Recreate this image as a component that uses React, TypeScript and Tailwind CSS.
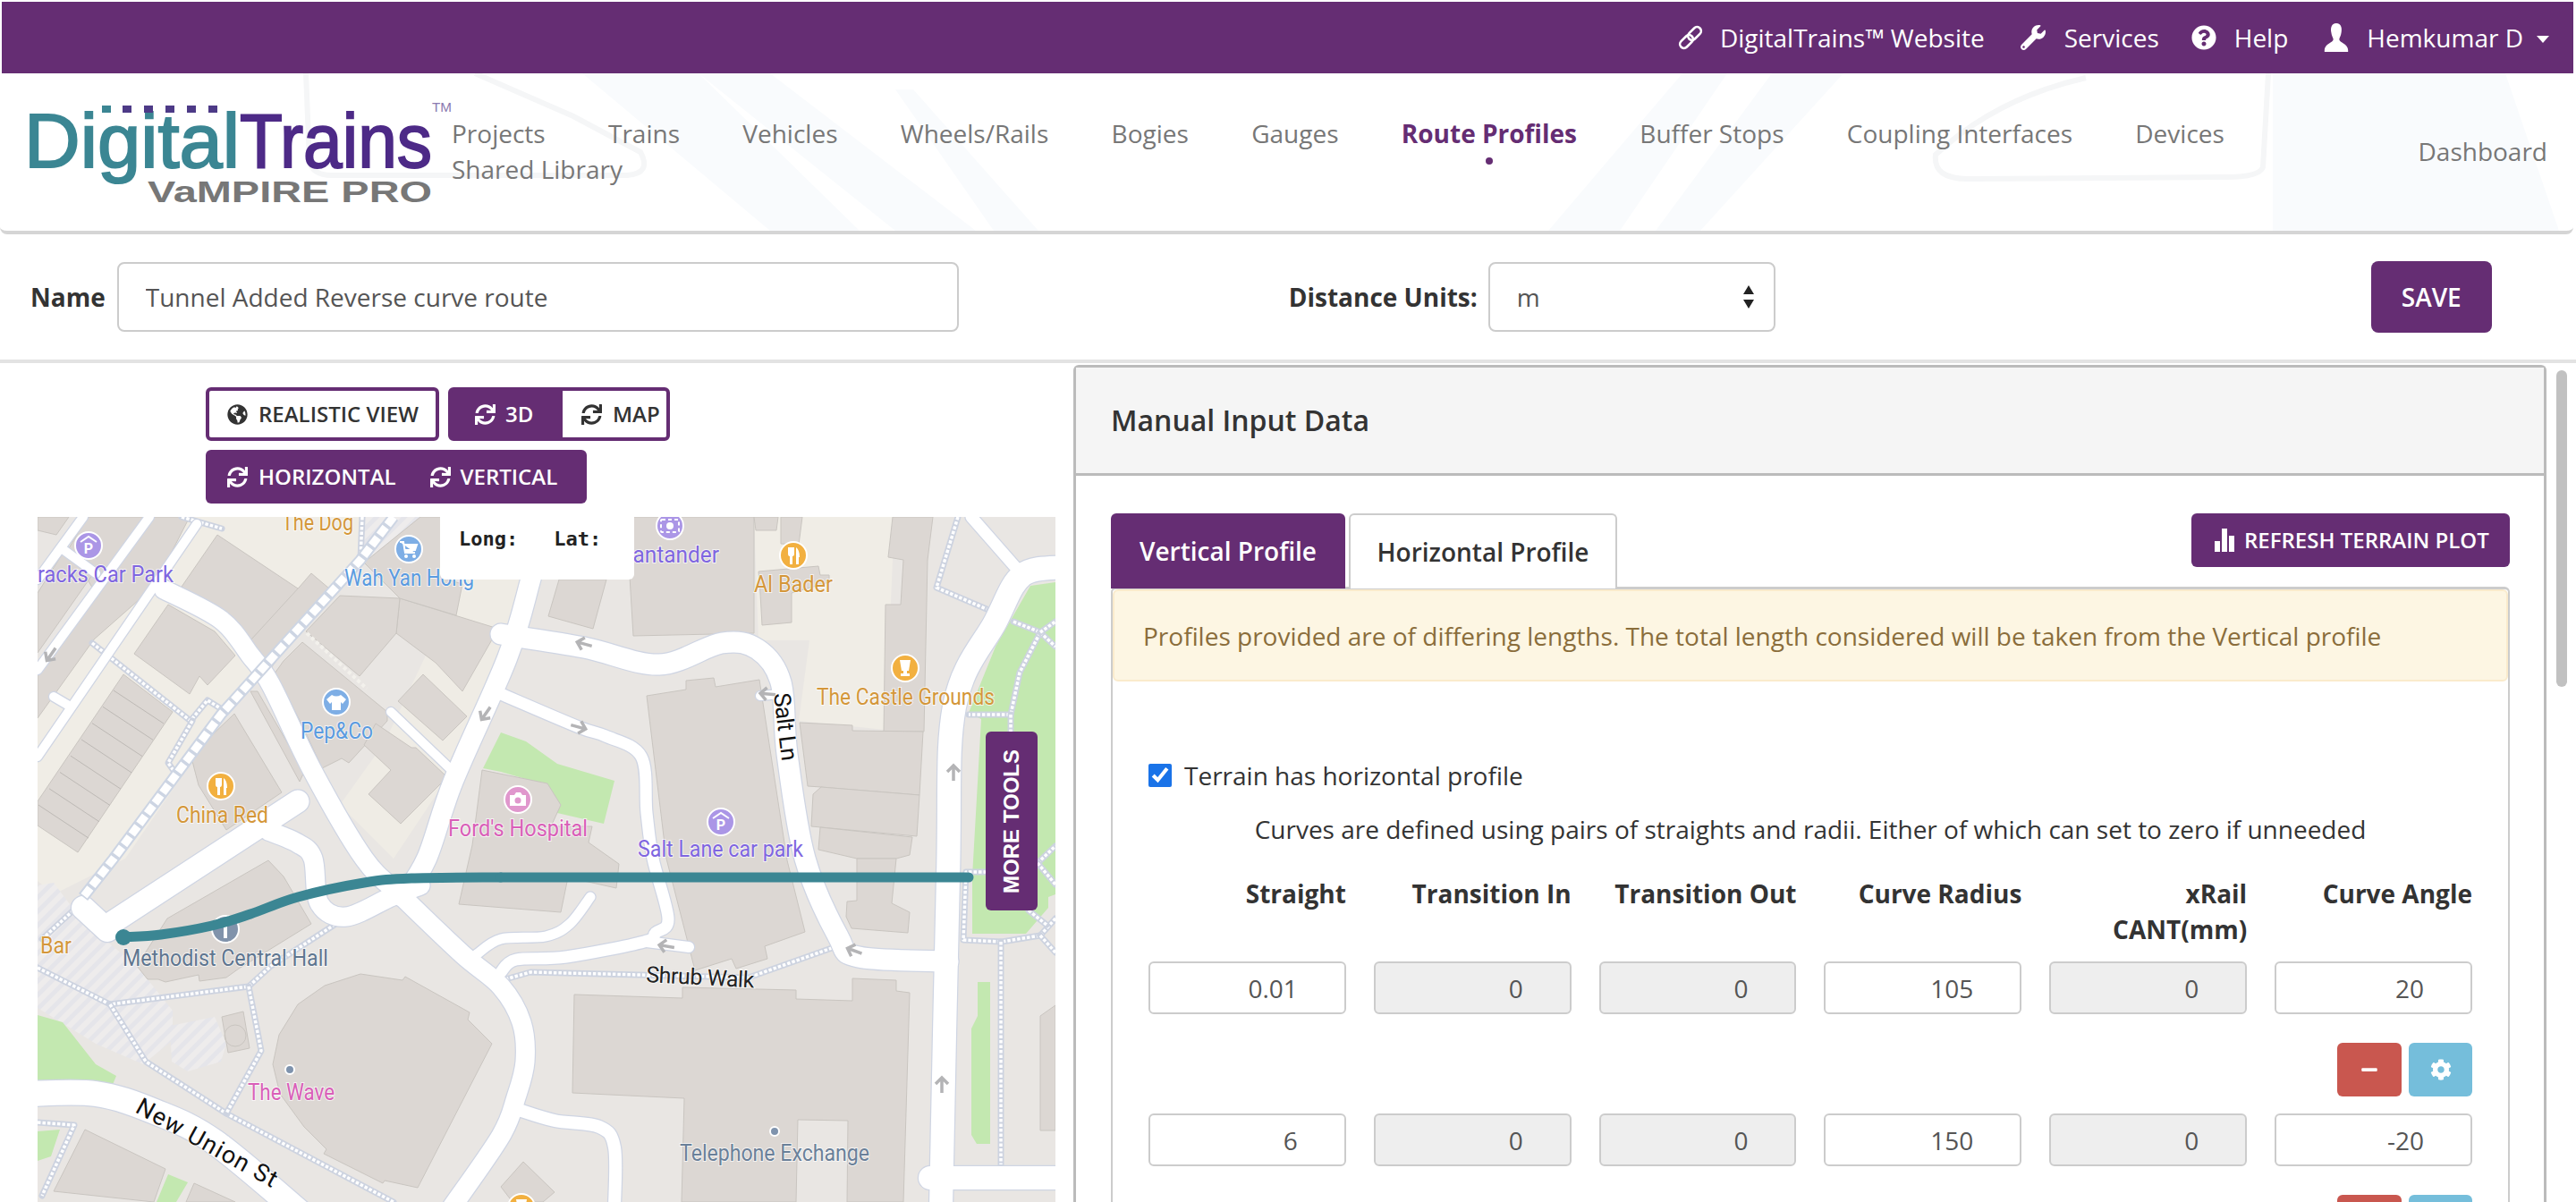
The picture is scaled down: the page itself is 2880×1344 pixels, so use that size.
import React from "react";
import { FaGlobeAmericas, FaSync, FaWrench, FaQuestionCircle, FaCog, FaMinus } from "react-icons/fa";

type Pt = [number, number];

// catmull-rom through the points, keeps the map roads from looking polygonal
const smooth = (p: Pt[]) => {
  let d = `M${p[0][0]} ${p[0][1]}`;
  for (let i = 0; i < p.length - 1; i++) {
    const a = p[i - 1] || p[i];
    const b = p[i];
    const c = p[i + 1];
    const e = p[i + 2] || c;
    d += ` C${b[0] + (c[0] - a[0]) / 6} ${b[1] + (c[1] - a[1]) / 6} ${c[0] - (e[0] - b[0]) / 6} ${c[1] - (e[1] - b[1]) / 6} ${c[0]} ${c[1]}`;
  }
  return d;
};

const poly = (p: number[]) => p.join(" ");

const buildings: number[][] = [
  [243, 598, 333, 658, 337, 661, 280, 716, 247, 688, 203, 656],
  [188, 676, 240, 706, 263, 733, 232, 766, 223, 756, 212, 776, 150, 731],
  [138, 754, 193, 796, 87, 953, 42, 923, 42, 896],
  [335, 656, 348, 641, 368, 658, 300, 751, 273, 739, 280, 716],
  [42, 593, 63, 598, 77, 578, 42, 578],
  [77, 613, 98, 578, 163, 578, 105, 660],
  [70, 619, 103, 643, 42, 730, 42, 663],
  [170, 578, 212, 578, 172, 656, 105, 715, 42, 803, 42, 753, 103, 666],
  [447, 669, 557, 703, 517, 773, 487, 741, 443, 708],
  [407, 629, 470, 578, 493, 578, 493, 646, 517, 653, 510, 688, 447, 669],
  [342, 706, 380, 666, 447, 669, 443, 708, 402, 756],
  [317, 739, 338, 718, 433, 796, 433, 806, 390, 853, 382, 848, 360, 859, 337, 809, 307, 753],
  [473, 754, 522, 801, 495, 828, 445, 784],
  [420, 809, 460, 836, 465, 836, 500, 869, 448, 921, 412, 888, 437, 861, 407, 833],
  [262, 798, 315, 886, 253, 928, 222, 878, 215, 851, 235, 824],
  [280, 773, 288, 773, 340, 863, 335, 874],
  [625, 648, 678, 648, 663, 703, 613, 689],
  [700, 578, 843, 578, 843, 708, 708, 711],
  [843, 578, 870, 578, 868, 593, 845, 593],
  [873, 578, 897, 578, 893, 609, 873, 608],
  [848, 639, 915, 633, 917, 643, 927, 643, 927, 651, 885, 663, 885, 696, 852, 699, 850, 664],
  [998, 578, 1043, 578, 1037, 626, 1033, 818, 988, 818, 990, 676, 1007, 676, 1010, 626, 993, 623],
  [894, 808, 953, 811, 953, 817, 1032, 818, 1028, 889, 918, 880, 903, 879],
  [918, 880, 1028, 889, 1025, 935, 907, 924, 909, 888],
  [917, 925, 1020, 936, 1017, 956, 1002, 960, 958, 960, 915, 950],
  [958, 960, 1002, 960, 997, 1010, 1017, 1020, 1015, 1043, 952, 1038, 946, 1025, 947, 1008, 958, 1007],
  [723, 778, 767, 771, 767, 761, 798, 758, 800, 768, 849, 760, 880, 962, 900, 1042, 855, 1058, 858, 1072, 823, 1083, 818, 1072, 777, 1085, 745, 960],
  [539, 861, 612, 876, 627, 900, 616, 924, 662, 924, 658, 942, 692, 966, 689, 993, 635, 981, 627, 1020, 513, 1011, 528, 945, 532, 915],
  [300, 962, 317, 980, 348, 1033, 267, 1083, 253, 1093, 223, 1097, 222, 1090, 185, 1098, 177, 1095, 165, 1095, 153, 1080, 187, 1027],
  [248, 1137, 272, 1131, 279, 1172, 255, 1177],
  [305, 1190, 312, 1157, 333, 1123, 363, 1102, 403, 1089, 450, 1096, 453, 1092, 525, 1132, 523, 1140, 550, 1167, 467, 1328, 430, 1320, 428, 1323, 362, 1290, 365, 1285, 340, 1260, 313, 1223],
  [95, 1263, 185, 1307, 172, 1344, 60, 1332],
  [217, 1323, 263, 1344, 208, 1344],
  [642, 1112, 763, 1116, 763, 1104, 890, 1107, 890, 1117, 953, 1119, 953, 1094, 1002, 1096, 1002, 1108, 1017, 1110, 1010, 1344, 947, 1344, 948, 1253, 892, 1252, 890, 1344, 762, 1344, 765, 1228, 640, 1222],
  [585, 1299, 620, 1333, 607, 1344, 573, 1344, 560, 1327],
  [1163, 1136, 1180, 1124, 1180, 1264, 1163, 1264],
];

const greens: number[][] = [
  [540, 859, 560, 819, 588, 829, 623, 854, 687, 873, 675, 921, 610, 906, 610, 886, 612, 878, 560, 863],
  [1152, 655, 1180, 651, 1180, 1000, 1172, 1003, 1172, 1015, 1147, 1044, 1087, 1044, 1087, 980, 1097, 804, 1083, 797, 1113, 723],
  [1093, 1098, 1107, 1098, 1107, 1279, 1092, 1279, 1086, 1269, 1086, 1150, 1093, 1136],
  [42, 1135, 70, 1143, 107, 1190, 130, 1203, 125, 1215, 42, 1210],
  [42, 1265, 67, 1263, 57, 1293, 42, 1298],
  [188, 1313, 210, 1322, 197, 1344, 175, 1344],
];

const roads: { w: number; p: Pt[] }[] = [
  { w: 10, p: [[93, 578], [42, 648]] },
  { w: 10, p: [[42, 749], [167, 578]] },
  { w: 10, p: [[70, 614], [107, 641]] },
  { w: 10, p: [[42, 846], [220, 586]] },
  { w: 10, p: [[60, 779], [77, 789]] },
  { w: 10, p: [[437, 796], [510, 866]] },
  { w: 21, p: [[183, 659], [247, 693], [280, 733], [303, 766], [350, 863], [407, 960], [450, 1003], [517, 1067], [560, 1103], [583, 1143], [587, 1187], [577, 1227], [560, 1270], [505, 1350]] },
  { w: 22, p: [[600, 620], [593, 649], [567, 736], [507, 873], [477, 960], [450, 1003]] },
  { w: 23, p: [[560, 709], [653, 724], [737, 743], [807, 719], [847, 726], [873, 763], [880, 843], [900, 960], [937, 1047], [960, 1070], [1060, 1075]] },
  { w: 13, p: [[560, 776], [647, 813], [677, 823], [717, 846], [723, 909], [730, 960], [747, 1027], [733, 1043], [720, 1053], [633, 1070], [577, 1073], [560, 1087]] },
  { w: 12, p: [[723, 1053], [770, 1059]] },
  { w: 10, p: [[850, 778], [873, 776]] },
  { w: 11, p: [[660, 1003], [637, 1033], [610, 1047], [560, 1050], [533, 1067]] },
  { w: 26, p: [[93, 1015], [120, 1040]] },
  { w: 25, p: [[120, 1035], [333, 896]] },
  { w: 21, p: [[300, 929], [333, 943], [350, 960], [357, 1010], [387, 1025], [437, 1003], [470, 990]] },
  { w: 28, p: [[30, 1223], [107, 1223], [173, 1243], [240, 1277], [340, 1360]] },
  { w: 13, p: [[1086, 578], [1143, 643]] },
  { w: 26, p: [[1190, 634], [1143, 643], [1113, 695], [1067, 790], [1060, 980], [1052, 1350]] },
  { w: 26, p: [[1040, 1317], [1190, 1317]] },
  { w: 14, p: [[577, 1240], [620, 1253], [670, 1260], [687, 1283], [687, 1350]] },
];

const paths: Pt[][] = [
  [[103, 719], [213, 806], [232, 783], [248, 793]],
  [[215, 806], [188, 853], [195, 863]],
  [[203, 578], [248, 591]],
  [[405, 578], [403, 626]],
  [[47, 1050], [82, 1018]],
  [[42, 1082], [123, 1123], [278, 1103], [303, 1080], [377, 1032]],
  [[123, 1123], [163, 1187], [253, 1245], [440, 1344]],
  [[278, 1103], [292, 1175], [253, 1245]],
  [[42, 1255], [83, 1258], [47, 1337]],
  [[565, 1095], [593, 1087], [837, 1093], [930, 1060]],
  [[1071, 578], [1047, 657], [1103, 681]],
  [[1133, 695], [1163, 707], [1140, 752], [1130, 799], [1083, 799]],
  [[1163, 707], [1180, 723]],
  [[1163, 707], [1180, 695]],
  [[1130, 799], [1130, 818]],
  [[1103, 975], [1080, 975], [1077, 1051], [1120, 1053], [1163, 1046]],
  [[1119, 1053], [1119, 1302]],
  [[1163, 1046], [1180, 1027]],
  [[1163, 1046], [1180, 1065]],
  [[1150, 1018], [1170, 1034]],
  [[1160, 965], [1180, 946]],
  [[1160, 965], [1180, 989]],
];

const arrows: [number, number, number][] = [
  [57, 732, 215], [543, 798, 215], [653, 720, 285], [647, 813, 105],
  [858, 776, 275], [1066, 864, 0], [745, 1058, 280], [955, 1063, 290], [1053, 1213, 0],
];

const labels: { t: string; x: number; y: number; w: number; c: string }[] = [
  { t: "racks Car Park", x: 42, y: 651, w: 152, c: "#7f66e0" },
  { t: "The Dog", x: 315, y: 593, w: 80, c: "#d4973a" },
  { t: "Wah Yan Hong", x: 385, y: 655, w: 145, c: "#5a9be0" },
  { t: "Pep&Co", x: 336, y: 826, w: 81, c: "#5a9be0" },
  { t: "China Red", x: 197, y: 920, w: 103, c: "#d4973a" },
  { t: "Ford's Hospital", x: 501, y: 935, w: 156, c: "#d95fb8" },
  { t: "Santander", x: 693, y: 629, w: 111, c: "#7f66e0" },
  { t: "Al Bader", x: 843, y: 662, w: 88, c: "#d4973a" },
  { t: "The Castle Grounds", x: 913, y: 788, w: 199, c: "#d4973a" },
  { t: "Salt Lane car park", x: 713, y: 958, w: 185, c: "#7f66e0" },
  { t: "Methodist Central Hall", x: 137, y: 1080, w: 230, c: "#5f7690" },
  { t: "Bar", x: 45, y: 1066, w: 35, c: "#d4973a" },
  { t: "The Wave", x: 277, y: 1230, w: 97, c: "#d95fb8" },
  { t: "Telephone Exchange", x: 760, y: 1298, w: 212, c: "#6a8099" },
];

const Pin = ({ x, y, c, kind }: { x: number; y: number; c: string; kind: string }) => (
  <g transform={`translate(${x} ${y})`}>
    <circle r="15" fill={c} stroke="#fff" strokeWidth="2" />
    {kind === "p" && (
      <>
        <path d="M-9 -4 L0 -10 L9 -4" fill="none" stroke="#fff" strokeWidth="2" />
        <text y="9" textAnchor="middle" fontSize="16" fontWeight="700" fill="#fff" fontFamily="Roboto, sans-serif">P</text>
      </>
    )}
    {kind === "fork" && <path d="M-6 -9 V-2 Q-6 1 -4 1 V10 H-1 V1 Q1 1 1 -2 V-9 M3 10 V-9 Q7 -6 7 2 H6 V10 Z" fill="#fff" />}
    {kind === "cart" && (
      <>
        <path d="M-10 -8 H-6 L-4 4 H7 M-6 -5 H9 L7 1 H-5" fill="#fff" stroke="#fff" strokeWidth="2" />
        <circle cx="-3" cy="8" r="2" fill="#fff" />
        <circle cx="6" cy="8" r="2" fill="#fff" />
      </>
    )}
    {kind === "tee" && <path d="M-5 -8 L-11 -3 L-7 2 L-5 0 V9 H5 V0 L7 2 L11 -3 L5 -8 Q0 -5 -5 -8 Z" fill="#fff" />}
    {kind === "cam" && (
      <>
        <path d="M-9 -5 H-4 L-2 -8 H3 L5 -5 H9 V7 H-9 Z" fill="#fff" />
        <circle cy="1" r="3.5" fill={c} />
      </>
    )}
    {kind === "cup" && <path d="M-6 -9 H6 L4 3 H2 V6 H5 V9 H-5 V6 H-2 V3 H-4 Z" fill="#fff" />}
    {kind === "money" && (
      <>
        <rect x="-10" y="-7" width="20" height="14" rx="1" fill="none" stroke="#fff" strokeWidth="2" strokeDasharray="4 3" />
        <circle r="4" fill="#fff" />
      </>
    )}
    {kind === "info" && <path d="M-2 -3 H2 V10 H-2 Z M-2 -9 H2 V-5 H-2 Z" fill="#fff" />}
  </g>
);

const RouteMap = () => (
  <svg viewBox="42 578 1138 766" className="block w-[1138px] h-[766px]">
    <defs>
      <pattern id="hatch" width="11" height="11" patternUnits="userSpaceOnUse" patternTransform="rotate(45)">
        <rect width="11" height="11" fill="#eeecec" />
        <rect width="5" height="11" fill="#e5e5ea" />
      </pattern>
    </defs>
    <rect x="42" y="578" width="1138" height="766" fill="#e9e6e3" />
    <polygon points={poly([160, 578, 440, 578, 400, 640, 250, 800, 140, 960, 60, 1000, 42, 985, 42, 800, 140, 660])} fill="#f0ede6" />
    <polygon points={poly([520, 640, 600, 640, 560, 760, 500, 870, 440, 960, 380, 900, 430, 830])} fill="#efece5" />
    <polygon points={poly([893, 578, 1000, 578, 990, 816, 893, 806, 905, 716, 848, 716, 843, 578])} fill="#f0ede6" />
    <polygon points={poly([42, 990, 60, 987, 87, 1023, 120, 1053, 153, 1080, 193, 1130, 193, 1163, 160, 1190, 107, 1167, 42, 1127])} fill="url(#hatch)" />
    <polygon points={poly([190, 1147, 240, 1137, 253, 1167, 247, 1187, 210, 1198, 192, 1187])} fill="url(#hatch)" />
    <polygon points={poly([405, 578, 470, 578, 420, 625, 400, 625])} fill="url(#hatch)" />
    {greens.map((g, i) => (
      <polygon key={i} points={poly(g)} fill="#c3e8b0" />
    ))}
    {buildings.map((b, i) => (
      <polygon key={i} points={poly(b)} fill="#dcd7d3" stroke="#c9c5c0" strokeWidth="1" />
    ))}
    <circle cx="263" cy="1158" r="12" fill="none" stroke="#c9c5c0" />
    {[0, 1, 2, 3, 4, 5, 6, 7].map((i) => (
      <line key={i} x1={127 - i * 12} y1={772 + i * 18.3} x2={183 - i * 12} y2={809 + i * 18.3} stroke="#bdb9b5" strokeWidth="1" />
    ))}
    <path d="M343 708 L410 770" fill="none" stroke="#f3f1ec" strokeWidth="4" strokeDasharray="4 3" />
    {paths.map((p, i) => (
      <g key={i} fill="none" strokeLinejoin="round">
        <polyline points={p.flat().join(" ")} stroke="#cdd3e0" strokeWidth="7" strokeLinecap="round" />
        <polyline points={p.flat().join(" ")} stroke="#fff" strokeWidth="3.5" strokeDasharray="3.5 2" />
      </g>
    ))}
    {roads.map((r, i) => (
      <path key={i} d={smooth(r.p)} fill="none" stroke="#cfd5e3" strokeWidth={r.w + 2.5} strokeLinecap="round" />
    ))}
    {roads.map((r, i) => (
      <path key={i} d={smooth(r.p)} fill="none" stroke="#fff" strokeWidth={r.w} strokeLinecap="round" />
    ))}
    <g fill="none">
      <polyline points="440,578 403,626 247,799 127,960 93,1003" stroke="#cdd5e3" strokeWidth="13" />
      <polyline points="440,578 403,626 247,799 127,960 93,1003" stroke="#fff" strokeWidth="9" strokeDasharray="11 3.5" />
    </g>
    {arrows.map(([x, y, r], i) => (
      <path key={i} d="M0 9 V-8 M-7 -1 L0 -8 L7 -1" transform={`translate(${x} ${y}) rotate(${r})`} fill="none" stroke="#b4b4b6" strokeWidth="3.5" />
    ))}
    <g fontFamily="Roboto, sans-serif" fontSize="25" stroke="#fff" strokeOpacity="0.7" strokeWidth="2" paintOrder="stroke">
      {labels.map((l) => (
        <text key={l.t} x={l.x} y={l.y} fill={l.c} textLength={l.w} lengthAdjust="spacingAndGlyphs">{l.t}</text>
      ))}
      <text x="722" y="1098" fill="#222" textLength="121" transform="rotate(3 722 1098)">Shrub Walk</text>
      <text x="150" y="1243" fill="#111" fontSize="27" textLength="176" transform="rotate(29 150 1243)">New Union St</text>
      <text x="865" y="776" fill="#111" fontSize="26" textLength="76" transform="rotate(83 865 776)">Salt Ln</text>
    </g>
    <Pin x={99} y={610} c="#ab96e6" kind="p" />
    <Pin x={457} y={614} c="#7eaee5" kind="cart" />
    <Pin x={376} y={785} c="#7eaee5" kind="tee" />
    <Pin x={247} y={879} c="#f2b040" kind="fork" />
    <Pin x={749} y={588} c="#ab96e6" kind="money" />
    <Pin x={887} y={621} c="#f2b040" kind="fork" />
    <Pin x={1012} y={747} c="#f2b040" kind="cup" />
    <Pin x={579} y={894} c="#e097cd" kind="cam" />
    <Pin x={806} y={919} c="#ab96e6" kind="p" />
    <Pin x={252} y={1039} c="#8193ab" kind="info" />
    <Pin x={583} y={1350} c="#f2b040" kind="cup" />
    <circle cx="324" cy="1196" r="5" fill="#7f93ad" stroke="#fff" strokeWidth="2" />
    <circle cx="866" cy="1265" r="5" fill="#7f93ad" stroke="#fff" strokeWidth="2" />
    <path d={smooth([[138, 1048], [180, 1045], [237, 1035], [280, 1022], [333, 1003], [407, 987], [460, 982], [560, 981]])} fill="none" stroke="#3b8693" strokeWidth="11" strokeLinecap="round" />
    <path d="M560 981 H1083" fill="none" stroke="#3b8693" strokeWidth="11" strokeLinecap="round" />
    <circle cx="138" cy="1048" r="9" fill="#3b8693" />
  </svg>
);

const Logo = () => (
  <svg viewBox="0 0 481 176" className="block w-[481px] h-[176px] shrink-0 relative">
    <g fontFamily="'Liberation Sans', Arial, sans-serif">
      <text x="3" y="105" fontSize="86" fill="#3b8693" stroke="#3b8693" strokeWidth="2" textLength="241" lengthAdjust="spacingAndGlyphs">Digital</text>
      <text x="244" y="105" fontSize="86" fill="#4d2a87" stroke="#4d2a87" strokeWidth="2" textLength="215" lengthAdjust="spacingAndGlyphs">Trains</text>
      <text x="141" y="144" fontSize="34" fontWeight="700" fill="#777" textLength="318" lengthAdjust="spacingAndGlyphs">VaMPIRE PRO</text>
      <text x="459" y="43" fontSize="15" fill="#8a7ab0" textLength="22" lengthAdjust="spacingAndGlyphs">TM</text>
    </g>
    <g>
      {[90, 113, 137, 161, 185, 209].map((x) => (
        <rect key={x} x={x} y="36" width="10" height="8" fill={x < 110 ? "#3b8693" : "#4d3a87"} />
      ))}
    </g>
  </svg>
);

const UserIcon = () => (
  <svg viewBox="0 0 28 34" className="w-[28px] h-[32px]" fill="#fff">
    <path d="M14 0 C20 0 21 6 20 11 C19.500 15 18 17 17.500 19 C17.500 23 28 24 28 32 V34 H0 V32 C0 24 10.500 23 10.500 19 C10 17 8.500 15 8 11 C7 6 8 0 14 0 Z" />
  </svg>
);

const LinkIcon = () => (
  <svg viewBox="0 0 28 28" className="w-[28px] h-[28px]" fill="none" stroke="#fff" strokeWidth="2.6">
    <rect x="10" y="5" width="17" height="9" rx="4.5" transform="rotate(-45 18.500 9.500)" />
    <rect x="1" y="14" width="17" height="9" rx="4.5" transform="rotate(-45 9.500 18.500)" />
  </svg>
);

const navItems = ["Projects", "Trains", "Vehicles", "Wheels/Rails", "Bogies", "Gauges", "Route Profiles", "Buffer Stops", "Coupling Interfaces", "Devices", "Shared Library"];

const NavBackdrop = () => (
  <svg viewBox="0 82 2875 176" className="absolute inset-0 w-full h-full">
    <g fill="#f9fbfd">
      <polygon points="650,82 780,82 960,258 860,258" />
      <polygon points="780,82 860,82 1090,258 1000,258" />
      <polygon points="1000,100 1020,100 1160,258 1110,258" />
      <polygon points="1730,258 1810,258 1930,82 1880,82" />
      <polygon points="1850,258 1900,258 2060,82 1980,82" />
      <polygon points="2540,82 2800,82 2860,258 2540,258" />
    </g>
    <g fill="none" stroke="#f5f6f7" strokeWidth="6">
      <path d="M341 82 L345 180 Q348 196 370 196 L700 196 Q728 194 715 170 L640 130 L530 82" />
      <path d="M2535 82 L2529 187 Q2525 198 2487 198 L2199 200 Q2160 200 2163 173 Q2230 110 2331 87" />
    </g>
  </svg>
);

const TopBar = () => (
  <div className="ml-[2px] mr-[3px] h-[80px] bg-[#652d73] flex justify-end items-center pr-[27px] text-white text-[28px]">
    <LinkIcon />
    <span className="ml-[19px]">DigitalTrains™ Website</span>
    <FaWrench className="ml-[40px] w-[28px] h-[28px]" />
    <span className="ml-[21px]">Services</span>
    <FaQuestionCircle className="ml-[36px] w-[28px] h-[28px]" />
    <span className="ml-[20px]">Help</span>
    <div className="ml-[40px]"><UserIcon /></div>
    <span className="ml-[20px]">Hemkumar D</span>
    <div className="ml-[15px] mt-[4px] w-0 h-0 border-x-[7px] border-x-transparent border-t-[8px] border-t-white" />
  </div>
);

const NavBar = () => (
  <div className="relative h-[180px] bg-white border-b-[4px] border-[#d5d5d5] rounded-b-[8px] overflow-hidden flex pl-[24px] pr-[29px] mr-[3px] text-[#777] text-[28px] leading-[40px]">
    <NavBackdrop />
    <Logo />
    <div className="relative w-[2100px] pt-[47px] flex flex-wrap content-start gap-x-[70.3px]">
      {navItems.map((n) =>
        n === "Route Profiles" ? (
          <div key={n} className="relative font-bold text-[#652d73]">
            {n}
            <div className="absolute left-1/2 top-[47px] w-[8px] h-[8px] -ml-[4px] rounded-full bg-[#652d73]" />
          </div>
        ) : (
          <div key={n}>{n}</div>
        )
      )}
    </div>
    <div className="relative ml-auto pt-[67px]">Dashboard</div>
  </div>
);

const NameRow = () => (
  <div className="h-[140px] flex items-center pl-[34px] text-[28px] text-[#333]">
    <label className="font-bold">Name</label>
    <input readOnly value="Tunnel Added Reverse curve route" className="ml-[13px] w-[941px] h-[78px] border-2 border-[#ccc] rounded-[8px] px-[30px] text-[#555] outline-none" />
    <label className="ml-[369px] font-bold whitespace-nowrap">Distance Units:</label>
    <div className="relative ml-[12px]">
      <select className="block w-[321px] h-[78px] border-2 border-[#ccc] rounded-[8px] px-[30px] text-[#555] bg-white appearance-none outline-none">
        <option>m</option>
      </select>
      <svg viewBox="0 0 16 28" className="absolute right-[22px] top-[25px] w-[16px] h-[28px]" fill="#222">
        <path d="M8 1 L14 11 H2 Z M8 27 L2 17 H14 Z" />
      </svg>
    </div>
    <button className="ml-[666px] w-[135px] h-[80px] bg-[#652d73] rounded-[8px] text-white font-semibold">SAVE</button>
  </div>
);

const ViewButtons = () => (
  <div className="pl-[230px] pt-[27px] text-[24px] font-semibold leading-none">
    <div className="flex gap-[10px]">
      <div className="w-[261px] h-[60px] border-[4px] border-[#652d73] rounded-[6px] bg-white text-[#333] flex items-center pl-[20px]">
        <FaGlobeAmericas className="w-[23px] h-[23px]" />
        <span className="ml-[12px]">REALISTIC VIEW</span>
      </div>
      <div className="w-[248px] h-[60px] border-[4px] border-[#652d73] rounded-[6px] bg-[#652d73] flex overflow-hidden">
        <div className="w-[124px] text-white flex items-center pl-[26px]">
          <FaSync className="w-[23px] h-[23px]" />
          <span className="ml-[11px]">3D</span>
        </div>
        <div className="flex-1 bg-white text-[#333] flex items-center pl-[21px]">
          <FaSync className="w-[23px] h-[23px]" />
          <span className="ml-[12px]">MAP</span>
        </div>
      </div>
    </div>
    <div className="mt-[10px] w-[426px] h-[60px] bg-[#652d73] rounded-[6px] text-white flex items-center pl-[24px]">
      <FaSync className="w-[23px] h-[23px]" />
      <span className="ml-[12px]">HORIZONTAL</span>
      <FaSync className="ml-[38px] w-[23px] h-[23px]" />
      <span className="ml-[11px]">VERTICAL</span>
    </div>
  </div>
);

const MapPanel = () => (
  <div className="relative ml-[42px] mt-[15px] w-[1138px] h-[766px]">
    <RouteMap />
    <div className="absolute left-[450px] top-[-10px] w-[217px] h-[80px] bg-white rounded-b-[6px] pl-[21px] pt-[18px] font-['DejaVu_Sans_Mono',monospace] font-bold text-[22px] leading-[34px] text-[#222] flex gap-[40px]">
      <span>Long:</span>
      <span>Lat:</span>
    </div>
    <div className="absolute left-[1060px] top-[240px] w-[58px] h-[200px] bg-[#652d73] rounded-[6px] text-white flex items-center justify-center">
      <span className="[writing-mode:vertical-rl] rotate-180 font-['Liberation_Sans',Arial,sans-serif] font-bold text-[24px]">MORE TOOLS</span>
    </div>
  </div>
);

const columns = ["Straight", "Transition In", "Transition Out", "Curve Radius", "xRail CANT(mm)", "Curve Angle"];
const profileRows = [
  ["0.01", "0", "0", "105", "0", "20"],
  ["6", "0", "0", "150", "0", "-20"],
];

const ProfileRow = ({ values }: { values: string[] }) => (
  <>
    <div className="grid grid-cols-6 gap-x-[31px]">
      {values.map((v, i) => (
        <input
          key={i}
          readOnly
          value={v}
          className={`w-full h-[59px] border-2 border-[#ccc] rounded-[6px] text-right pr-[52px] text-[#555] outline-none ${
            i === 1 || i === 2 || i === 4 ? "bg-[#eee]" : "bg-white"
          }`}
        />
      ))}
    </div>
    <div className="flex justify-end gap-[8px] mt-[32px] mb-[19px] text-white">
      <button className="w-[72px] h-[60px] bg-[#c9574f] rounded-[6px] flex items-center justify-center">
        <FaMinus className="w-[20px] h-[20px]" />
      </button>
      <button className="w-[71px] h-[60px] bg-[#75bedb] rounded-[6px] flex items-center justify-center">
        <FaCog className="w-[24px] h-[24px]" />
      </button>
    </div>
  </>
);

const InputPanel = () => (
  <div className="w-[1647px] mt-[2px] border-x-[3px] border-t-[3px] border-[#bbb] rounded-t-[6px] text-[28px] text-[#333] h-[950px]">
    <div className="h-[121px] bg-[#f5f5f5] border-b-[3px] border-[#bbb] flex items-center pl-[39px] text-[32px] font-semibold">Manual Input Data</div>
    <div className="pl-[39px] pr-[38px] pt-[42px]">
      <div className="flex items-start">
        <div className="w-[262px] h-[84px] bg-[#652d73] rounded-t-[6px] text-white font-semibold flex items-center justify-center">Vertical Profile</div>
        <div className="ml-[4px] w-[300px] h-[84px] bg-white border-x-2 border-t-2 border-[#ccc] rounded-t-[6px] font-semibold flex items-center justify-center relative z-10">Horizontal Profile</div>
        <button className="ml-auto w-[356px] h-[60px] bg-[#652d73] rounded-[6px] text-white text-[24px] font-semibold flex items-center pl-[26px]">
          <svg viewBox="0 0 22 26" className="w-[22px] h-[26px] mr-[11px]" fill="#fff">
            <path d="M0 14 H6 V26 H0 Z M8 0 H14 V26 H8 Z M16 8 H22 V26 H16 Z" />
          </svg>
          REFRESH TERRAIN PLOT
        </button>
      </div>
      <div className="-mt-[2px] border-x-2 border-t-[3px] border-[#ccc] rounded-t-[6px] h-[700px]">
        <div className="h-[103px] bg-[#fdf6e3] border-2 border-[#faebcc] rounded-[6px] flex items-center pl-[32px] text-[#8a6d3b]">
          Profiles provided are of differing lengths. The total length considered will be taken from the Vertical profile
        </div>
        <div className="px-[40px] pt-[90px]">
          <label className="flex items-center h-[30px]">
            <input type="checkbox" readOnly checked className="w-[26px] h-[26px] accent-[#1a73e8]" />
            <span className="ml-[14px]">Terrain has horizontal profile</span>
          </label>
          <div className="mt-[25px] text-center leading-[40px]">Curves are defined using pairs of straights and radii. Either of which can set to zero if unneeded</div>
          <div className="mt-[30px] h-[98px] grid grid-cols-6 gap-x-[31px] font-bold text-right leading-[40px]">
            {columns.map((c) => (
              <div key={c} className="pt-[2px]">{c}</div>
            ))}
          </div>
          {profileRows.map((r, i) => (
            <ProfileRow key={i} values={r} />
          ))}
        </div>
      </div>
    </div>
  </div>
);

export default function App() {
  return (
    <div className="h-[1344px] overflow-hidden bg-white pt-[2px] font-['Open_Sans',sans-serif]">
      <TopBar />
      <NavBar />
      <NameRow />
      <div className="h-[4px] bg-[#e3e3e3]" />
      <div className="flex">
        <div className="w-[1200px] shrink-0">
          <ViewButtons />
          <MapPanel />
        </div>
        <InputPanel />
        <div className="ml-[11px] mt-[8px] w-[12px] h-[354px] rounded-full bg-[#c1c1c1]" />
      </div>
    </div>
  );
}
